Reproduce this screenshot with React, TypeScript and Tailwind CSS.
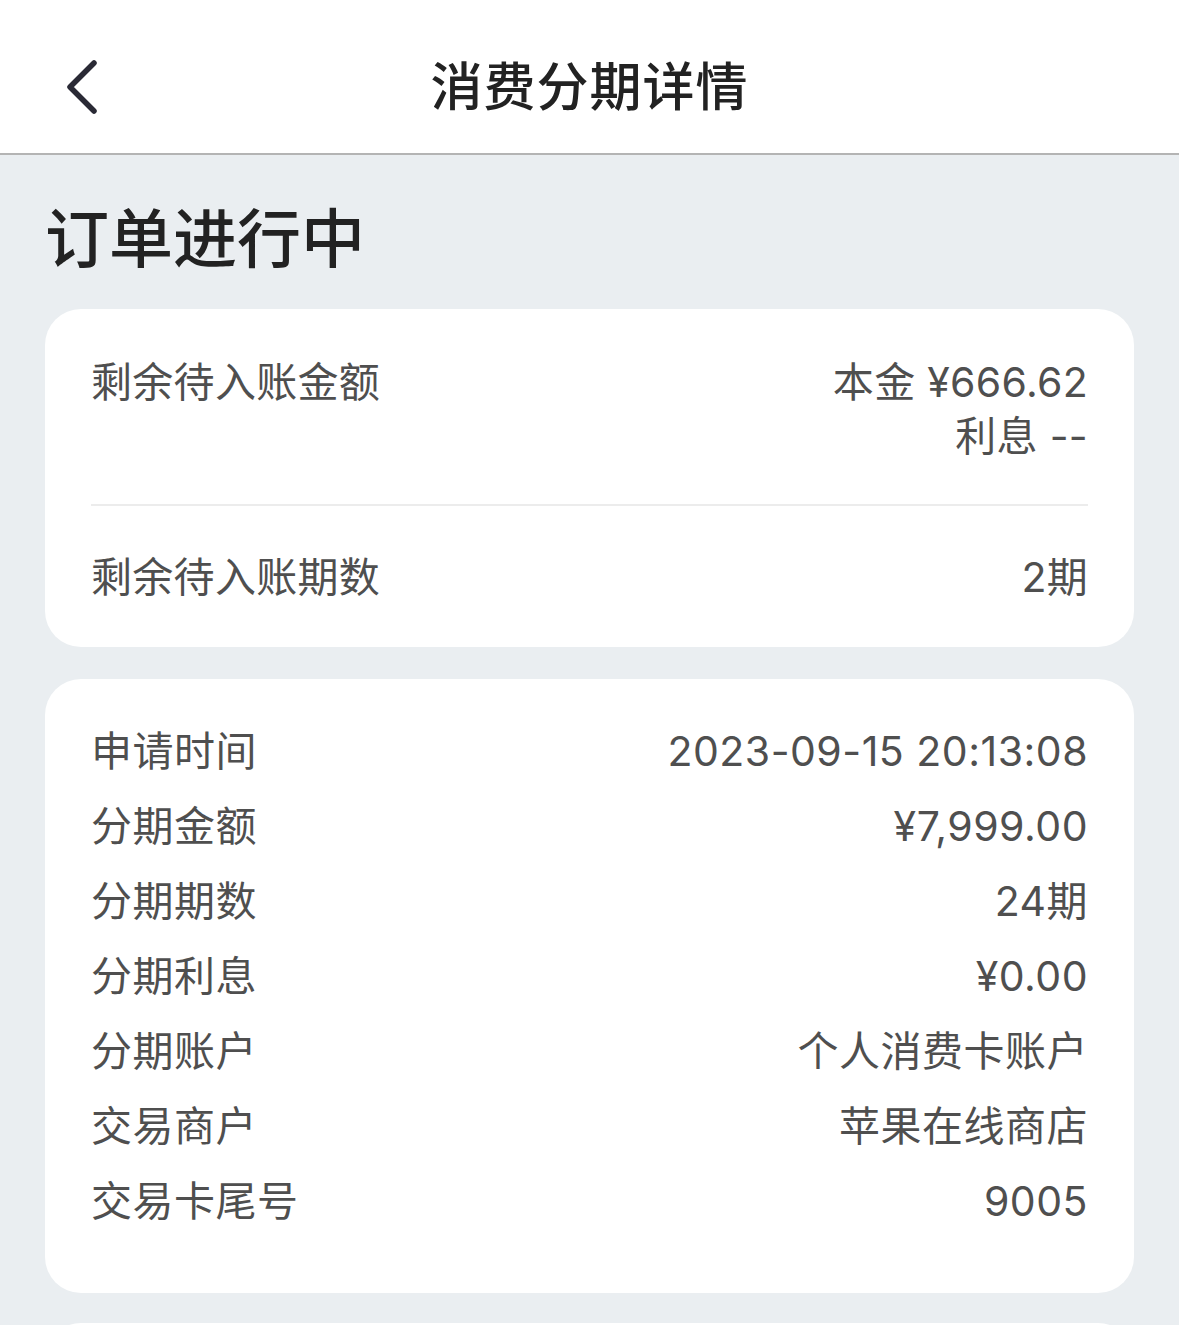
export default function App() {
  const details = [
    ["申请时间", "2023-09-15 20:13:08"],
    ["分期金额", "¥7,999.00"],
    ["分期期数", "24期"],
    ["分期利息", "¥0.00"],
    ["分期账户", "个人消费卡账户"],
    ["交易商户", "苹果在线商店"],
    ["交易卡尾号", "9005"],
  ];

  return (
    <div className="h-screen overflow-hidden bg-[#eaeef1] font-['Inter','Noto_Sans_CJK_SC',sans-serif]">
      {/* HEADER */}
      <header className="relative h-[155px] pt-[22px] bg-white border-b-2 border-[#b4b4b4] flex items-center justify-center">
        <button className="absolute left-[62px] top-[56px] w-[40px] h-[62px] flex items-center justify-center">
          <svg width="36" height="60" viewBox="0 0 36 60" fill="none">
            <path d="M30 6 L6 30 L30 54" stroke="#2a2a35" strokeWidth="5.5" strokeLinecap="round" strokeLinejoin="round" />
          </svg>
        </button>
        <h1 className="text-[52px] leading-none font-medium text-[#222] tracking-[1px]">消费分期详情</h1>
      </header>

      <main className="px-[45px]">
        <h2 className="pt-[44px] text-[64px] leading-[80px] font-medium text-[#222]">订单进行中</h2>

        {/* SUMMARY CARD */}
        <section className="mt-[30px] bg-white rounded-[36px] px-[46px] pt-[46px] pb-[43px] text-[41px] leading-[54px] text-[#4f4f4f] tracking-[0.3px]">
          <div className="flex justify-between">
            <span>剩余待入账金额</span>
            <div className="flex flex-col items-end">
              <span>本金 ¥666.62</span>
              <span>利息 --</span>
            </div>
          </div>
          <div className="mt-[41px] mb-[44px] h-[2px] bg-[#ececec]" />
          <div className="flex justify-between">
            <span>剩余待入账期数</span>
            <span>2期</span>
          </div>
        </section>

        {/* DETAIL CARD */}
        <section className="mt-[32px] bg-white rounded-[36px] px-[46px] pt-[35px] pb-[54px] text-[41px] leading-[75px] text-[#4f4f4f] tracking-[0.5px]">
          {details.map(([label, value]) => (
            <div key={label} className="flex justify-between">
              <span>{label}</span>
              <span>{value}</span>
            </div>
          ))}
        </section>

        <section className="mt-[30px] h-[200px] bg-white rounded-[36px]" />
      </main>
    </div>
  );
}
